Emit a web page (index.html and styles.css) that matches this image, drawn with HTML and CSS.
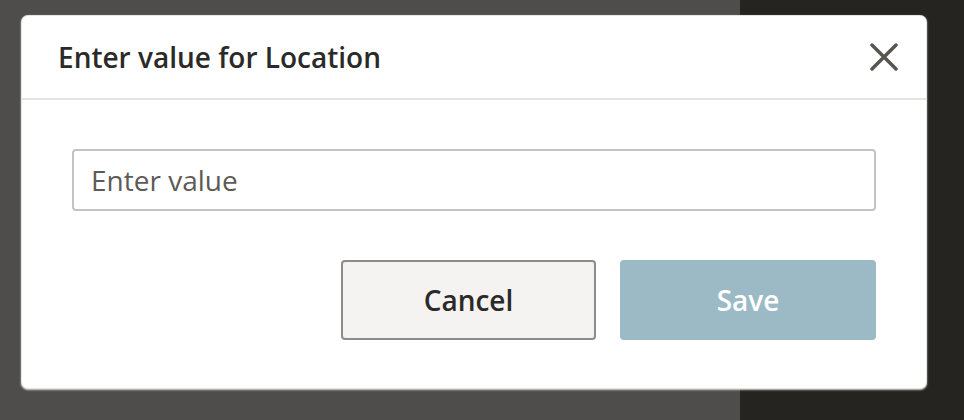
FILE: index.html
```html
<!DOCTYPE html>
<html>
<head>
<meta charset="utf-8">
<link rel="stylesheet" href="styles.css">
</head>
<body>
<div class="backdrop">
  <div class="pane-left"></div>
  <div class="pane-right"></div>
</div>
<div class="modal">
  <div class="modal-header">
    <h1 class="modal-title">Enter value for Location</h1>
    <button class="close" aria-label="Close">
      <svg width="28" height="28" viewBox="0 0 28 28"><path d="M2 2 L26 26 M26 2 L2 26" stroke="#58554f" stroke-width="3.5" stroke-linecap="round" fill="none"/></svg>
    </button>
  </div>
  <div class="modal-body">
    <input class="field" type="text" placeholder="Enter value">
    <div class="actions">
      <button class="btn btn-cancel">Cancel</button>
      <button class="btn btn-save">Save</button>
    </div>
  </div>
</div>
</body>
</html>
```
FILE: styles.css
```css
html, body {
  margin: 0;
  padding: 0;
  width: 964px;
  height: 420px;
  overflow: hidden;
  font-family: "Open Sans", "Liberation Sans", sans-serif;
}
.backdrop {
  display: flex;
  height: 420px;
}
.pane-left {
  width: 740px;
  background: #4e4d4b;
}
.pane-right {
  flex: 1;
  background: #252420;
}
.modal {
  position: absolute;
  left: 22px;
  top: 16px;
  width: 904px;
  background: #fff;
  border-radius: 6px;
  box-shadow: 0 0 0 1px #e6e5e1, 0 1px 2px 1px rgba(230,229,225,0.9);
}
.modal-header {
  height: 82px;
  display: flex;
  align-items: center;
  justify-content: space-between;
  padding: 0 28px 0 36px;
  border-bottom: 2px solid #e4e3df;
}
.modal-title {
  margin: 0;
  font-size: 28px;
  font-weight: 600;
  color: #2b2a28;
  letter-spacing: 0;
}
.close {
  border: 0;
  background: none;
  padding: 0;
  width: 28px;
  height: 28px;
  display: flex;
  cursor: pointer;
}
.modal-body {
  padding: 49px 50px 48px;
}
.field {
  display: block;
  width: 100%;
  box-sizing: border-box;
  height: 62px;
  border: 2px solid #c4c3bf;
  border-radius: 4px;
  padding: 0 17px;
  font-family: "Open Sans", "Liberation Sans", sans-serif;
  font-size: 28px;
  color: #303030;
  outline: none;
}
.field::placeholder {
  color: #5d5b57;
  opacity: 1;
}
.actions {
  margin-top: 49px;
  display: flex;
  justify-content: flex-end;
  gap: 24px;
}
.btn {
  width: 256px;
  height: 80px;
  box-sizing: border-box;
  border-radius: 4px;
  font-family: "Open Sans", "Liberation Sans", sans-serif;
  font-size: 28px;
  font-weight: 600;
  cursor: pointer;
}
.btn-cancel {
  width: 255px;
  background: #f4f3f1;
  border: 2px solid #8e8b88;
  color: #2b2a28;
}
.btn-save {
  background: #9bbac5;
  border: 0;
  color: #fff;
}
```
